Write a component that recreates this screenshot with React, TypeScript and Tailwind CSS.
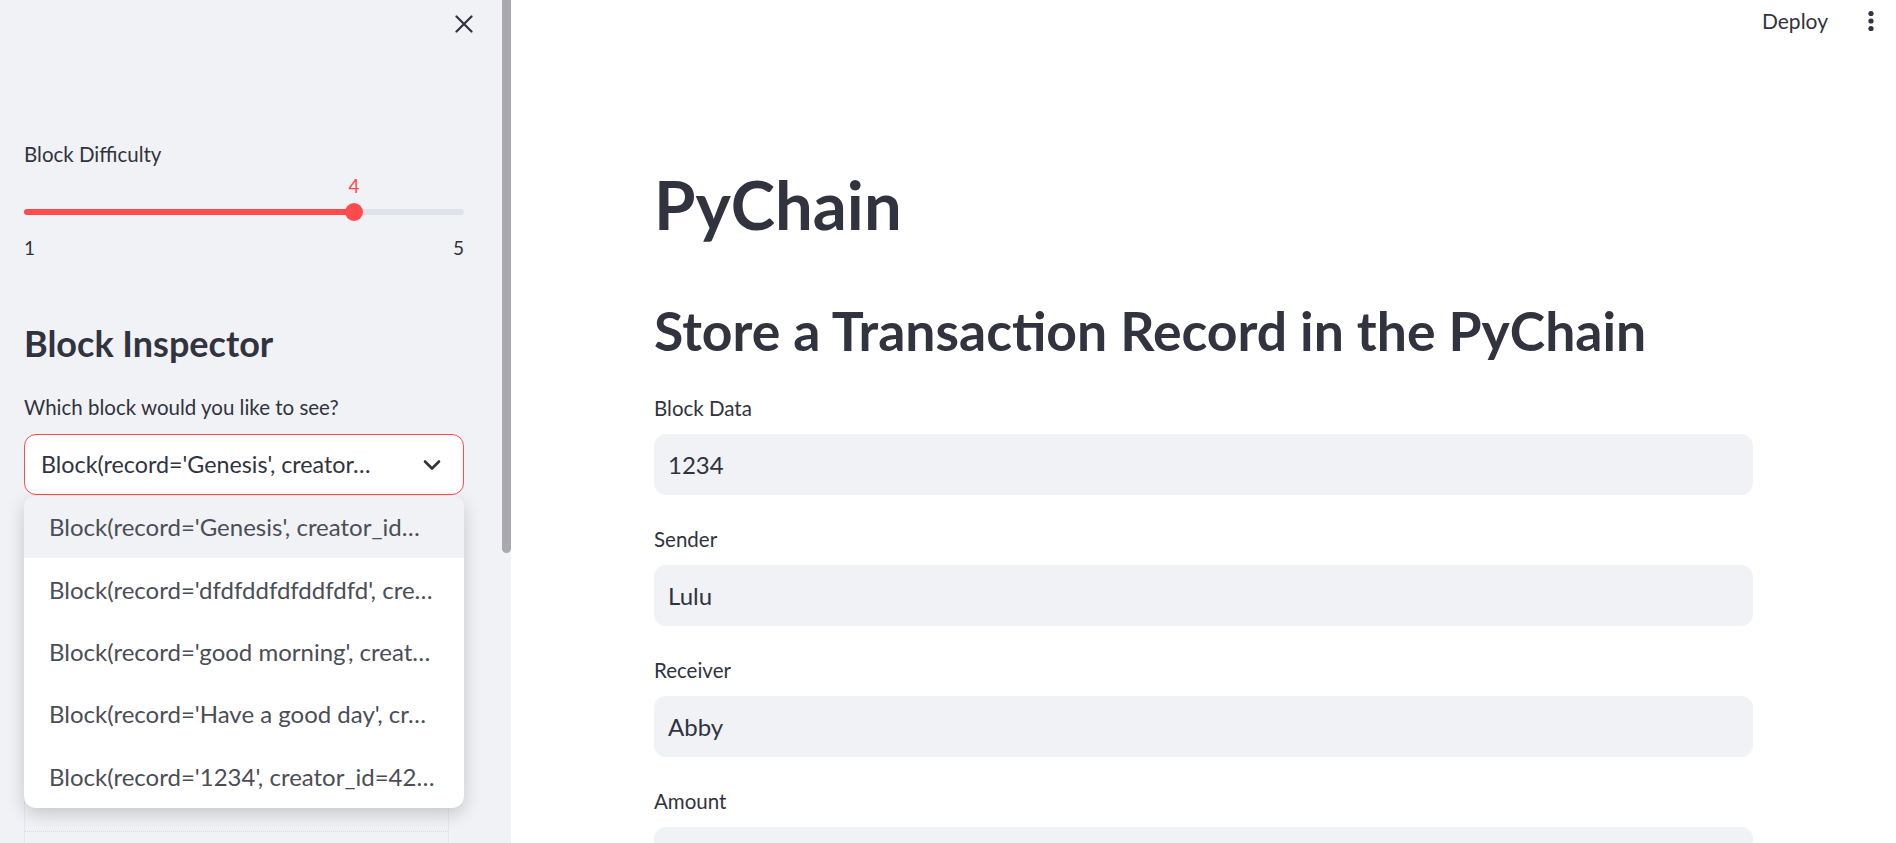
import { useState } from "react";

const options = [
  "Block(record='Genesis', creator_id…",
  "Block(record='dfdfddfdfddfdfd', cre…",
  "Block(record='good morning', creat…",
  "Block(record='Have a good day', cr…",
  "Block(record='1234', creator_id=42…",
];

const fields = [
  { label: "Block Data", value: "1234" },
  { label: "Sender", value: "Lulu" },
  { label: "Receiver", value: "Abby" },
  { label: "Amount", value: "" },
];

export default function App() {
  const [difficulty] = useState(4);
  const pct = ((difficulty - 1) / 4) * 100;

  return (
    <div className="flex h-[843px] w-full overflow-hidden bg-white font-[Lato,sans-serif] text-[#31333f]">
      {/* sidebar */}
      <aside className="flex w-[511px] shrink-0 bg-[#f0f2f6]">
        <div className="w-[502px]">
          <div className="flex h-[48px] items-center justify-end pr-[29px]">
            <svg width="18" height="18" viewBox="0 0 18 18" fill="none" stroke="#31333f" strokeWidth="2.2" strokeLinecap="round">
              <path d="M1.5 1.5l15 15M16.5 1.5l-15 15" />
            </svg>
          </div>

          <div className="w-[464px] pl-[24px] pt-[90px]">
            <p className="text-[20.5px] leading-[32px]">Block Difficulty</p>

            <div className="relative h-[66px]">
              <div
                className="absolute top-[3.6px] w-[40px] -translate-x-1/2 text-center text-[19px] leading-[24px] text-[#ff4b4b]"
                style={{ left: `${pct}%` }}
              >
                {difficulty}
              </div>
              <div className="absolute left-0 right-0 top-[39px] h-[6px] rounded-full bg-[#dfe2ea]">
                <div className="h-full rounded-full bg-[#ff4b4b]" style={{ width: `${pct}%` }} />
              </div>
              <div
                className="absolute top-[33px] h-[18px] w-[18px] -translate-x-1/2 rounded-full bg-[#ff4b4b]"
                style={{ left: `${pct}%` }}
              />
            </div>
            <div className="flex justify-between text-[19px] leading-[24px]">
              <span>1</span>
              <span>5</span>
            </div>

            <h2 className="mt-[62px] text-[36px] font-bold leading-[42px]">Block Inspector</h2>

            <p className="mt-[27px] text-[20.5px] leading-[32px]">Which block would you like to see?</p>

            <div className="relative mt-[11px] w-[440px]">
              <div className="flex h-[61px] items-center justify-between rounded-[12px] border-[1.5px] border-[#ff4b4b] bg-white pl-[16px] pr-[22px]">
                <span className="text-[23.3px]">Block(record='Genesis', creator…</span>
                <svg width="18" height="12" viewBox="0 0 18 12" fill="none" stroke="#31333f" strokeWidth="2.6" strokeLinecap="round" strokeLinejoin="round">
                  <path d="M2 2.5l7 7 7-7" />
                </svg>
              </div>

              <ul className="absolute left-0 right-0 top-[62px] z-10 overflow-hidden rounded-[12px] bg-white shadow-[0_6px_18px_rgba(0,0,0,0.18)]">
                {options.map((o, i) => (
                  <li
                    key={o}
                    className={
                      "flex h-[62.4px] items-center whitespace-nowrap pl-[25px] text-[24px] text-[#4b4d57] " +
                      (i === 0 ? "bg-[#f0f2f6]" : "")
                    }
                  >
                    {o}
                  </li>
                ))}
              </ul>

              <div className="mt-[24px] w-[425px] rounded-[6px] border border-[#e3e6ec]">
                <div className="h-[312px] border-b border-dotted border-[#d9dce3]" />
                <div className="h-[40px]" />
              </div>
            </div>
          </div>
        </div>
        {/* scrollbar */}
        <div className="w-[9px]">
          <div className="h-[553px] rounded-b-full bg-[#a8a8ae]" />
        </div>
      </aside>

      {/* main */}
      <main className="flex-1">
        <header className="flex h-[41px] items-center justify-end gap-[40px] pr-[22px]">
          <span className="text-[21px]">Deploy</span>
          <svg width="6" height="22" viewBox="0 0 6 22" fill="#31333f">
            <circle cx="3" cy="3.5" r="2.6" />
            <circle cx="3" cy="11" r="2.6" />
            <circle cx="3" cy="18.5" r="2.6" />
          </svg>
        </header>

        <div className="ml-[143px] w-[1099px]">
          <h1 className="mt-[124px] text-[67px] font-bold leading-[79px]">PyChain</h1>
          <h2 className="mt-[54px] text-[53.5px] font-bold leading-[64px]">Store a Transaction Record in the PyChain</h2>

          <div className="mt-[30px] flex flex-col gap-[28px]">
            {fields.map((f) => (
              <div key={f.label}>
                <p className="mb-[10px] text-[20.5px] leading-[32px]">{f.label}</p>
                <div className="flex h-[61px] items-center rounded-[12px] bg-[#f0f2f6] px-[14px] text-[24px]">
                  {f.value}
                </div>
              </div>
            ))}
          </div>
        </div>
      </main>
    </div>
  );
}
